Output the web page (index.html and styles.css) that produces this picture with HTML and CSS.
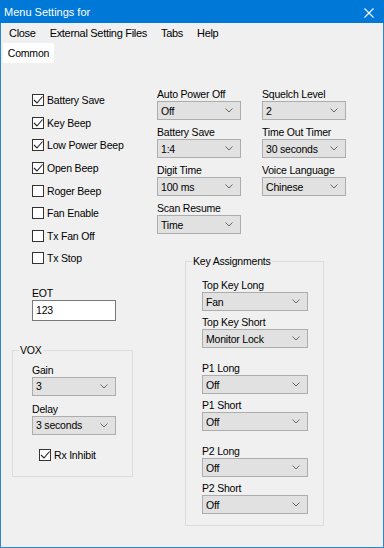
FILE: index.html
```html
<!DOCTYPE html>
<html lang="en">
<head>
  <meta charset="UTF-8">
  <title>Menu Settings for</title>
  <link rel="stylesheet" href="styles.css">
</head>
<body>
  <div class="window">
    <div class="titlebar">
      <span class="title">Menu Settings for</span>
      <svg class="close-x" width="10" height="10" viewBox="0 0 10 10"><path d="M0.5 0.5 L9.5 9.5 M9.5 0.5 L0.5 9.5" stroke="#fff" stroke-width="1.1" fill="none"/></svg>
    </div>
    <div class="menubar">
      <span class="menu-item">Close</span>
      <span class="menu-item">External Setting Files</span>
      <span class="menu-item">Tabs</span>
      <span class="menu-item">Help</span>
    </div>
    <div class="tabs">
      <span class="tab">Common</span>
    </div>
    <div class="tab-page">
      <div class="col-left">
        <div class="checklist">
          <div class="check"><span class="box"><svg width="10" height="10" viewBox="0 0 10 10"><path d="M1 5 L4 8 L9.5 1.5" stroke="#222" stroke-width="1.1" fill="none"/></svg></span>Battery Save</div>
          <div class="check"><span class="box"><svg width="10" height="10" viewBox="0 0 10 10"><path d="M1 5 L4 8 L9.5 1.5" stroke="#222" stroke-width="1.1" fill="none"/></svg></span>Key Beep</div>
          <div class="check"><span class="box"><svg width="10" height="10" viewBox="0 0 10 10"><path d="M1 5 L4 8 L9.5 1.5" stroke="#222" stroke-width="1.1" fill="none"/></svg></span>Low Power Beep</div>
          <div class="check"><span class="box"><svg width="10" height="10" viewBox="0 0 10 10"><path d="M1 5 L4 8 L9.5 1.5" stroke="#222" stroke-width="1.1" fill="none"/></svg></span>Open Beep</div>
          <div class="check"><span class="box"></span>Roger Beep</div>
          <div class="check"><span class="box"></span>Fan Enable</div>
          <div class="check"><span class="box"></span>Tx Fan Off</div>
          <div class="check"><span class="box"></span>Tx Stop</div>
        </div>

        <div class="field eot">
          <div class="field-label">EOT</div>
          <div class="textbox">123</div>
        </div>

        <fieldset class="group vox">
          <legend>VOX</legend>
          <div class="field">
            <div class="field-label">Gain</div>
            <div class="combo"><span>3</span><svg class="chev" width="8" height="5" viewBox="0 0 8 5"><path d="M0.5 0.5 L4 4 L7.5 0.5" stroke="#666" fill="none"/></svg></div>
          </div>
          <div class="field">
            <div class="field-label">Delay</div>
            <div class="combo"><span>3 seconds</span><svg class="chev" width="8" height="5" viewBox="0 0 8 5"><path d="M0.5 0.5 L4 4 L7.5 0.5" stroke="#666" fill="none"/></svg></div>
          </div>
          <div class="check rx"><span class="box"><svg width="10" height="10" viewBox="0 0 10 10"><path d="M1 5 L4 8 L9.5 1.5" stroke="#222" stroke-width="1.1" fill="none"/></svg></span>Rx Inhibit</div>
        </fieldset>
      </div>

      <div class="col-right">
        <div class="combo-grid">
          <div class="field">
            <div class="field-label">Auto Power Off</div>
            <div class="combo"><span>Off</span><svg class="chev" width="8" height="5" viewBox="0 0 8 5"><path d="M0.5 0.5 L4 4 L7.5 0.5" stroke="#666" fill="none"/></svg></div>
          </div>
          <div class="field">
            <div class="field-label">Squelch Level</div>
            <div class="combo"><span>2</span><svg class="chev" width="8" height="5" viewBox="0 0 8 5"><path d="M0.5 0.5 L4 4 L7.5 0.5" stroke="#666" fill="none"/></svg></div>
          </div>
          <div class="field">
            <div class="field-label">Battery Save</div>
            <div class="combo"><span>1:4</span><svg class="chev" width="8" height="5" viewBox="0 0 8 5"><path d="M0.5 0.5 L4 4 L7.5 0.5" stroke="#666" fill="none"/></svg></div>
          </div>
          <div class="field">
            <div class="field-label">Time Out Timer</div>
            <div class="combo"><span>30 seconds</span><svg class="chev" width="8" height="5" viewBox="0 0 8 5"><path d="M0.5 0.5 L4 4 L7.5 0.5" stroke="#666" fill="none"/></svg></div>
          </div>
          <div class="field">
            <div class="field-label">Digit Time</div>
            <div class="combo"><span>100 ms</span><svg class="chev" width="8" height="5" viewBox="0 0 8 5"><path d="M0.5 0.5 L4 4 L7.5 0.5" stroke="#666" fill="none"/></svg></div>
          </div>
          <div class="field">
            <div class="field-label">Voice Language</div>
            <div class="combo"><span>Chinese</span><svg class="chev" width="8" height="5" viewBox="0 0 8 5"><path d="M0.5 0.5 L4 4 L7.5 0.5" stroke="#666" fill="none"/></svg></div>
          </div>
          <div class="field">
            <div class="field-label">Scan Resume</div>
            <div class="combo"><span>Time</span><svg class="chev" width="8" height="5" viewBox="0 0 8 5"><path d="M0.5 0.5 L4 4 L7.5 0.5" stroke="#666" fill="none"/></svg></div>
          </div>
        </div>

        <fieldset class="group keys">
          <legend>Key Assignments</legend>
          <div class="field">
            <div class="field-label">Top Key Long</div>
            <div class="combo"><span>Fan</span><svg class="chev" width="8" height="5" viewBox="0 0 8 5"><path d="M0.5 0.5 L4 4 L7.5 0.5" stroke="#666" fill="none"/></svg></div>
          </div>
          <div class="field">
            <div class="field-label">Top Key Short</div>
            <div class="combo"><span>Monitor Lock</span><svg class="chev" width="8" height="5" viewBox="0 0 8 5"><path d="M0.5 0.5 L4 4 L7.5 0.5" stroke="#666" fill="none"/></svg></div>
          </div>
          <div class="field pair-start">
            <div class="field-label">P1 Long</div>
            <div class="combo"><span>Off</span><svg class="chev" width="8" height="5" viewBox="0 0 8 5"><path d="M0.5 0.5 L4 4 L7.5 0.5" stroke="#666" fill="none"/></svg></div>
          </div>
          <div class="field">
            <div class="field-label">P1 Short</div>
            <div class="combo"><span>Off</span><svg class="chev" width="8" height="5" viewBox="0 0 8 5"><path d="M0.5 0.5 L4 4 L7.5 0.5" stroke="#666" fill="none"/></svg></div>
          </div>
          <div class="field pair-start">
            <div class="field-label">P2 Long</div>
            <div class="combo"><span>Off</span><svg class="chev" width="8" height="5" viewBox="0 0 8 5"><path d="M0.5 0.5 L4 4 L7.5 0.5" stroke="#666" fill="none"/></svg></div>
          </div>
          <div class="field">
            <div class="field-label">P2 Short</div>
            <div class="combo"><span>Off</span><svg class="chev" width="8" height="5" viewBox="0 0 8 5"><path d="M0.5 0.5 L4 4 L7.5 0.5" stroke="#666" fill="none"/></svg></div>
          </div>
        </fieldset>
      </div>
    </div>
  </div>
</body>
</html>
```

FILE: styles.css
```css
body {
  margin: 0;
  padding: 0;
  background-color: #f0f0f0;
}
.window {
  box-sizing: border-box;
  width: 384px;
  height: 548px;
  display: flex;
  flex-direction: column;
  border: 1px solid #2b87d6;
  border-top: none;
  background-color: #f0f0f0;
  font-family: "Liberation Sans", Arial, sans-serif;
  color: #000;
}
.titlebar {
  height: 23px;
  margin: 0 -1px;
  display: flex;
  align-items: center;
  justify-content: space-between;
  background-color: #0078d7;
  color: white;
  font-size: 11px;
}
.title {
  padding-left: 4px;
}
.close-x {
  margin-right: 10px;
  margin-top: 2px;
}
.menubar {
  height: 20px;
  display: flex;
  align-items: center;
  padding-left: 1px;
  font-size: 11px;
  letter-spacing: -0.3px;
}
.menu-item {
  padding: 0 7px;
}
.tabs {
  height: 20px;
  display: flex;
  padding-left: 2px;
}
.tab {
  width: 51px;
  display: flex;
  align-items: center;
  justify-content: center;
  background-color: white;
  font-size: 10.5px;
  letter-spacing: -0.2px;
}
.tab-page {
  flex: 1;
  display: flex;
  gap: 24px;
  margin: 0 2px 3px 2px;
  padding: 25px 0 0 9px;
  font-size: 10.5px;
  letter-spacing: -0.2px;
}
.col-left {
  width: 121px;
}
.checklist {
  padding-top: 1px;
}
.check {
  height: 22.6px;
  display: flex;
  align-items: center;
  padding-left: 20px;
}
.box {
  box-sizing: border-box;
  width: 12px;
  height: 12px;
  margin-right: 3px;
  display: flex;
  align-items: center;
  justify-content: center;
  border: 1px solid #333;
  background-color: white;
}
.field-label {
  height: 13px;
  line-height: 13px;
  white-space: nowrap;
}
.combo {
  box-sizing: border-box;
  height: 19px;
  display: flex;
  align-items: center;
  justify-content: space-between;
  padding: 0 7px 0 3px;
  border: 1px solid #adadad;
  background-color: #e1e1e1;
  white-space: nowrap;
}
.chev {
  flex-shrink: 0;
}
.textbox {
  box-sizing: border-box;
  width: 84px;
  height: 21px;
  display: flex;
  align-items: center;
  padding-left: 3px;
  border: 1px solid #7a7a7a;
  background-color: white;
}
.eot {
  margin: 17px 0 0 20px;
}
.group {
  margin: 0;
  min-width: 0;
  border: 1px solid #dcdcdc;
}
.group legend {
  line-height: 13px;
  padding: 0 1px;
}
.vox {
  margin-top: 23px;
  padding: 7px 15px 14px 19px;
}
.vox legend {
  margin-left: -13px;
}
.vox .combo {
  width: 84px;
}
.vox .field + .field {
  margin-top: 7px;
}
.vox .rx {
  height: 13px;
  margin-top: 14px;
  padding-left: 7px;
}
.col-right {
  width: 190px;
}
.combo-grid {
  display: grid;
  grid-template-columns: 84px 84px;
  column-gap: 21px;
  row-gap: 6px;
}
.keys {
  width: 139px;
  box-sizing: border-box;
  margin: 21px 0 0 28px;
  padding: 11px 15px 11px 16px;
}
.keys legend {
  margin-left: -10px;
}
.keys .field + .field {
  margin-top: 5px;
}
.keys .field.pair-start {
  margin-top: 14px;
}
```
